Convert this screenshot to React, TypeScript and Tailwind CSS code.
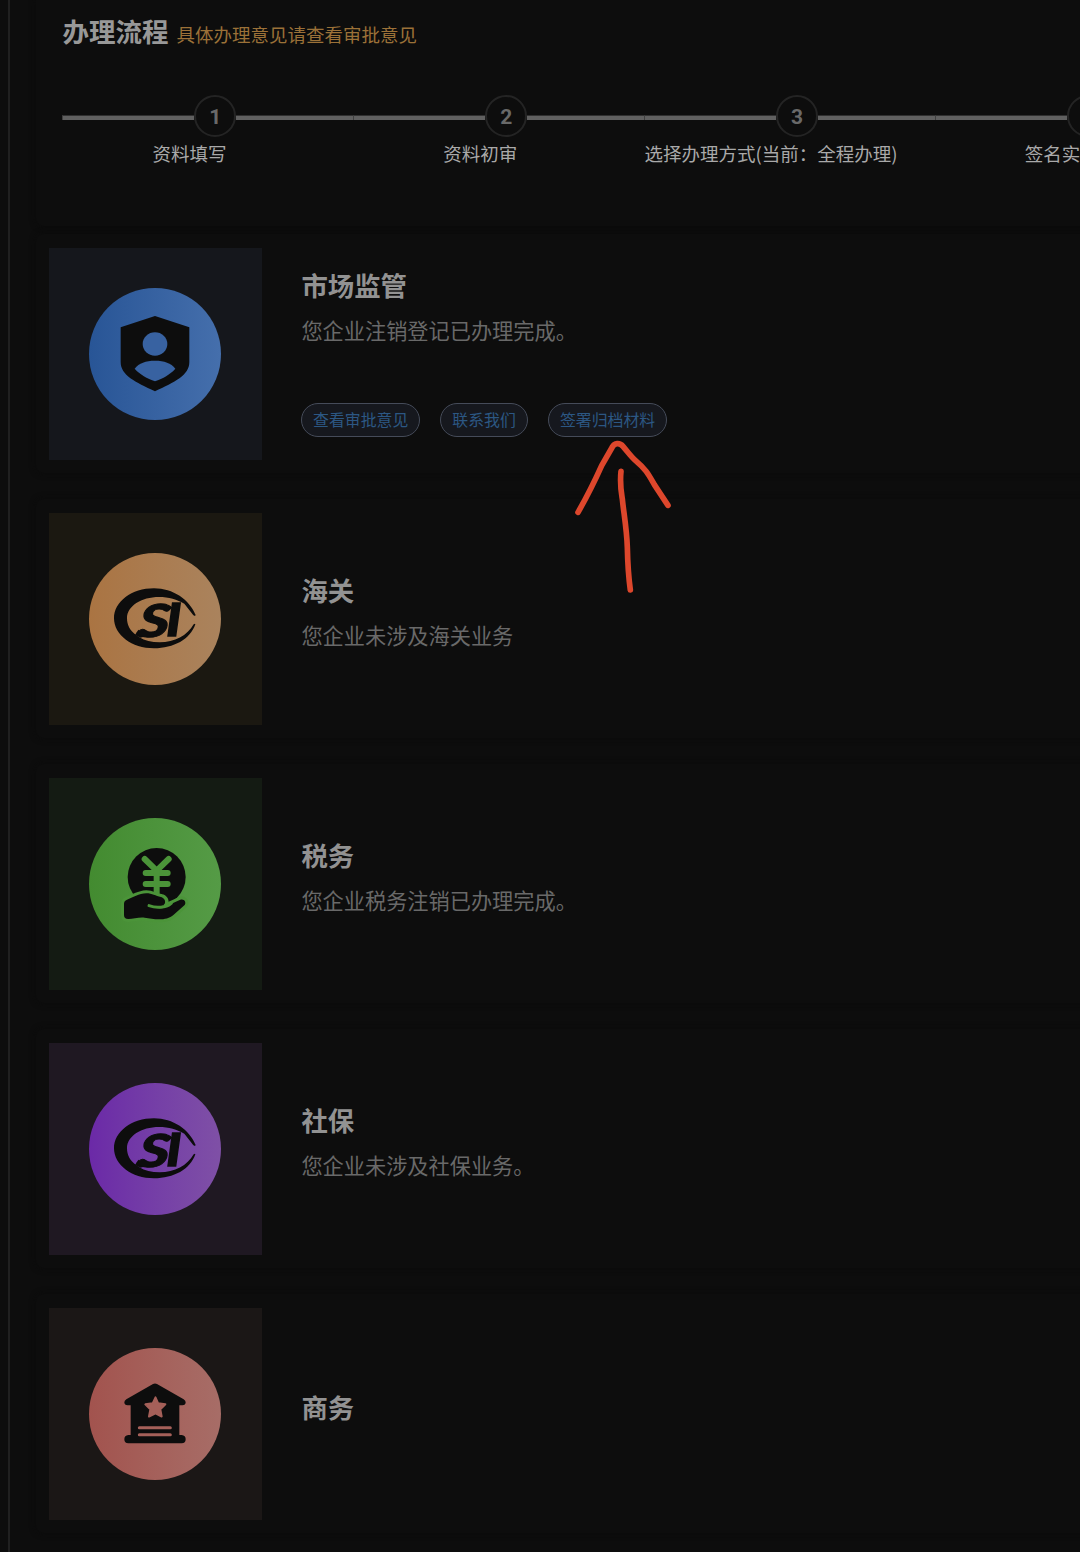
import type { ReactNode } from 'react';

const steps = ['资料填写', '资料初审', '选择办理方式(当前：全程办理)', '签名实名'];

function ShieldIcon() {
  return (
    <svg className="size-full" viewBox="148 143 396 396">
      <path fill="#0d0d0d" d="M346 227 L449 261 V365 C449 405 405 425 346 453 C287 425 243 405 243 365 V261 Z" />
      <ellipse cx="346" cy="311" rx="37" ry="35" fill="#3862a1" />
      <path fill="#3862a1" d="M285 385 C298 368 318 361 346 361 C374 361 394 368 407 385 C391 403 370 414 346 423 C322 414 301 403 285 385 Z" />
    </svg>
  );
}

function EmblemIcon() {
  return (
    <svg className="size-full" viewBox="148 143 396 396">
      <path
        fill="#0d0d0d"
        d="M468 330 C450 283 400 249 343 249 C276 249 223 289 223 339 C223 389 276 429 343 429 C402 429 452 402 467 357 Q467 354 462 357 C443 391 405 411 360 411 C335 411 315 406 299 396 L288 388 C271 376 262 359 262 339 C262 302 305 275 358 275 C387 275 413 283 434 295 L460 328 Q468 336 468 326 Z"
      />
      <path fill="#0d0d0d" d="M296 373 L286 389 L302 397 L322 392 Z" />
      <g fill="#0d0d0d" stroke="#0d0d0d" fontFamily="Lato, 'Liberation Sans'" fontWeight="900" fontStyle="italic" fontSize="136">
        <text transform="translate(292 394) skewX(-7) scale(1.32 1)" strokeWidth="3">S</text>
        <text transform="translate(380 393) scale(1.15 1)" strokeWidth="4">I</text>
      </g>
    </svg>
  );
}

function TaxIcon() {
  return (
    <svg className="size-full" viewBox="148 143 396 396">
      <circle cx="351" cy="320" r="87" fill="#0d0d0d" />
      <g stroke="#4b9439" strokeWidth="18" strokeLinecap="round" fill="none">
        <path d="M315 266 L351 301 L387 266 M318 308 H384 M318 341 H384" />
        <path d="M351 300 V370" />
      </g>
      <path
        fill="#0d0d0d"
        stroke="#4b9439"
        strokeWidth="18"
        paintOrder="stroke"
        d="M262 388 C279 382 298 370 320 369 C338 369 347 377 364 380 C375 383 379 393 375 402 L387 404 L422 388 C433 384 441 395 435 404 L402 433 C378 454 342 446 315 442 C299 440 281 445 266 446 C257 446 253 442 253 434 V401 C253 393 256 391 262 388 Z"
      />
      <path fill="none" stroke="#4b9439" strokeWidth="9" strokeLinecap="round" d="M328 406 C342 411 362 412 374 408 C386 401 385 384 371 377" />
      <path fill="none" stroke="#4b9439" strokeWidth="7" strokeLinecap="round" d="M359 411 C374 412 386 408 396 399" />
    </svg>
  );
}

function CommerceIcon() {
  return (
    <svg className="size-full" viewBox="148 143 396 396">
      <path
        fill="#0d0d0d"
        d="M340 251 Q346 248 352 251 L432 297 Q438 301 438 306 Q438 315 428 315 H419 V404 H426 Q438 405 438 417 Q438 429 426 429 H266 Q254 429 254 417 Q254 405 266 404 H273 V315 H264 Q254 315 254 306 Q254 301 260 297 Z"
      />
      <path
        fill="#a56059"
        stroke="#a56059"
        strokeWidth="6"
        strokeLinejoin="round"
        d="M347.500 291 L355.500 309 L377 312 L362 327 L366 348.500 L347.500 339 L328 348.500 L332 327 L317 312 L339 309 Z"
      />
      <path stroke="#a56059" strokeWidth="9" strokeLinecap="round" d="M299 382.500 H392 M299 403.500 H392" />
    </svg>
  );
}

type Row = {
  title: string;
  text?: string;
  tile: string;
  disc: string;
  body: string;
  icon: ReactNode;
  actions?: string[];
};

const rows: Row[] = [
  {
    title: '市场监管',
    text: '您企业注销登记已办理完成。',
    tile: 'bg-[#15171c]',
    disc: 'from-[#285596] to-[#456fac]',
    body: 'pb-[9px]',
    icon: <ShieldIcon />,
    actions: ['查看审批意见', '联系我们', '签署归档材料'],
  },
  { title: '海关', text: '您企业未涉及海关业务', tile: 'bg-[#1b1811]', disc: 'from-[#aa7442] to-[#aa835d]', body: 'pb-[13px]', icon: <EmblemIcon /> },
  { title: '税务', text: '您企业税务注销已办理完成。', tile: 'bg-[#141b13]', disc: 'from-[#438b30] to-[#559b46]', body: 'pb-[13px]', icon: <TaxIcon /> },
  { title: '社保', text: '您企业未涉及社保业务。', tile: 'bg-[#1f1822]', disc: 'from-[#6b29a7] to-[#7f50a6]', body: 'pb-[13px]', icon: <EmblemIcon /> },
  { title: '商务', tile: 'bg-[#1b1716]', disc: 'from-[#a2534e] to-[#a76d67]', body: 'pb-[15px]', icon: <CommerceIcon /> },
];

export default function App() {
  return (
    <div className="h-[1552px] w-[1080px] overflow-hidden bg-[#0d0d0d] pl-[8px] font-['Noto_Sans_CJK_SC',sans-serif]">
      <main className="relative h-full border-l-2 border-[#202020] pl-[26px]">
        <section className="h-[226px] w-[1200px] rounded-bl-lg pl-[26.400px] shadow-[0_0_6px_#0b0b0b]">
          <div className="flex h-[62px] items-center whitespace-nowrap">
            <h1 className="text-[26.500px] leading-[40px] font-bold text-[#989898]">办理流程</h1>
            <span className="ml-[8px] pt-[6px] text-[18.500px] leading-[28px] text-[#9b7138]">具体办理意见请查看审批意见</span>
          </div>
          <ol className="flex pt-[32px]">
            {steps.map((label, i) => (
              <li key={label} className="w-[290.800px] shrink-0">
                <div className="flex h-[43px] items-center">
                  <span className="mt-[4px] h-[5px] w-[132px] border-t border-l border-t-[#303030] border-l-[#404040] bg-[#606060]" />
                  <span className="flex size-[42px] items-center justify-center rounded-full border-2 border-[#242424] pt-[3px] font-['Roboto','Noto_Sans',sans-serif] text-[21px] leading-none font-bold text-[#696969]">
                    {i + 1}
                  </span>
                  <span className="mt-[4px] h-[5px] flex-1 border-t border-[#303030] bg-[#606060]" />
                </div>
                <div className="flex w-[254px] justify-center text-[18.500px] leading-[32px] whitespace-nowrap text-[#a9a9a9]">{label}</div>
              </li>
            ))}
          </ol>
        </section>

        <div className="mt-[8px] flex w-[1200px] flex-col gap-[26px]">
          {rows.map((row) => (
            <section key={row.title} className="flex h-[239px] rounded-lg pt-[14px] pb-[13px] pl-[13px] shadow-[0_0_6px_#0b0b0b]">
              <div className={`flex h-[212px] w-[212.500px] shrink-0 items-center justify-center ${row.tile}`}>
                <div className={`size-[132px] rounded-full bg-linear-to-r ${row.disc}`}>{row.icon}</div>
              </div>
              <div className={`flex flex-col justify-center pl-[39.900px] ${row.body}`}>
                <h2 className="text-[26.400px] leading-[44px] font-bold text-[#929292]">{row.title}</h2>
                {row.text && <p className="text-[21.200px] leading-[45px] text-[#696969]">{row.text}</p>}
                {row.actions && (
                  <div className="mt-[51px] mb-[-1px] -ml-[0.400px] flex gap-[20px]">
                    {row.actions.map((action) => (
                      <button key={action} className="h-[34px] rounded-full border-[1.500px] border-[#454b59] bg-[#16181e] px-[11px] text-[15.900px] leading-[28px] text-[#2c5783]">
                        {action}
                      </button>
                    ))}
                  </div>
                )}
              </div>
            </section>
          ))}
        </div>

        <svg className="absolute top-[430px] left-[550px] h-[170px] w-[130px]" viewBox="0 0 390 510" fill="none" stroke="#dd472c" strokeWidth="17" strokeLinecap="round" strokeLinejoin="round">
          <path d="M54 247 C80 202 103 156 125 107 L157 51 C163 39 179 37 189 49 C205 68 213 80 226 91 C259 119 266 134 283 164 L324 226" />
          <path d="M183 124 C179 163 183 182 187 207 C191 249 200 294 202 352 C203 401 205 436 211 480" />
        </svg>
      </main>
    </div>
  );
}
